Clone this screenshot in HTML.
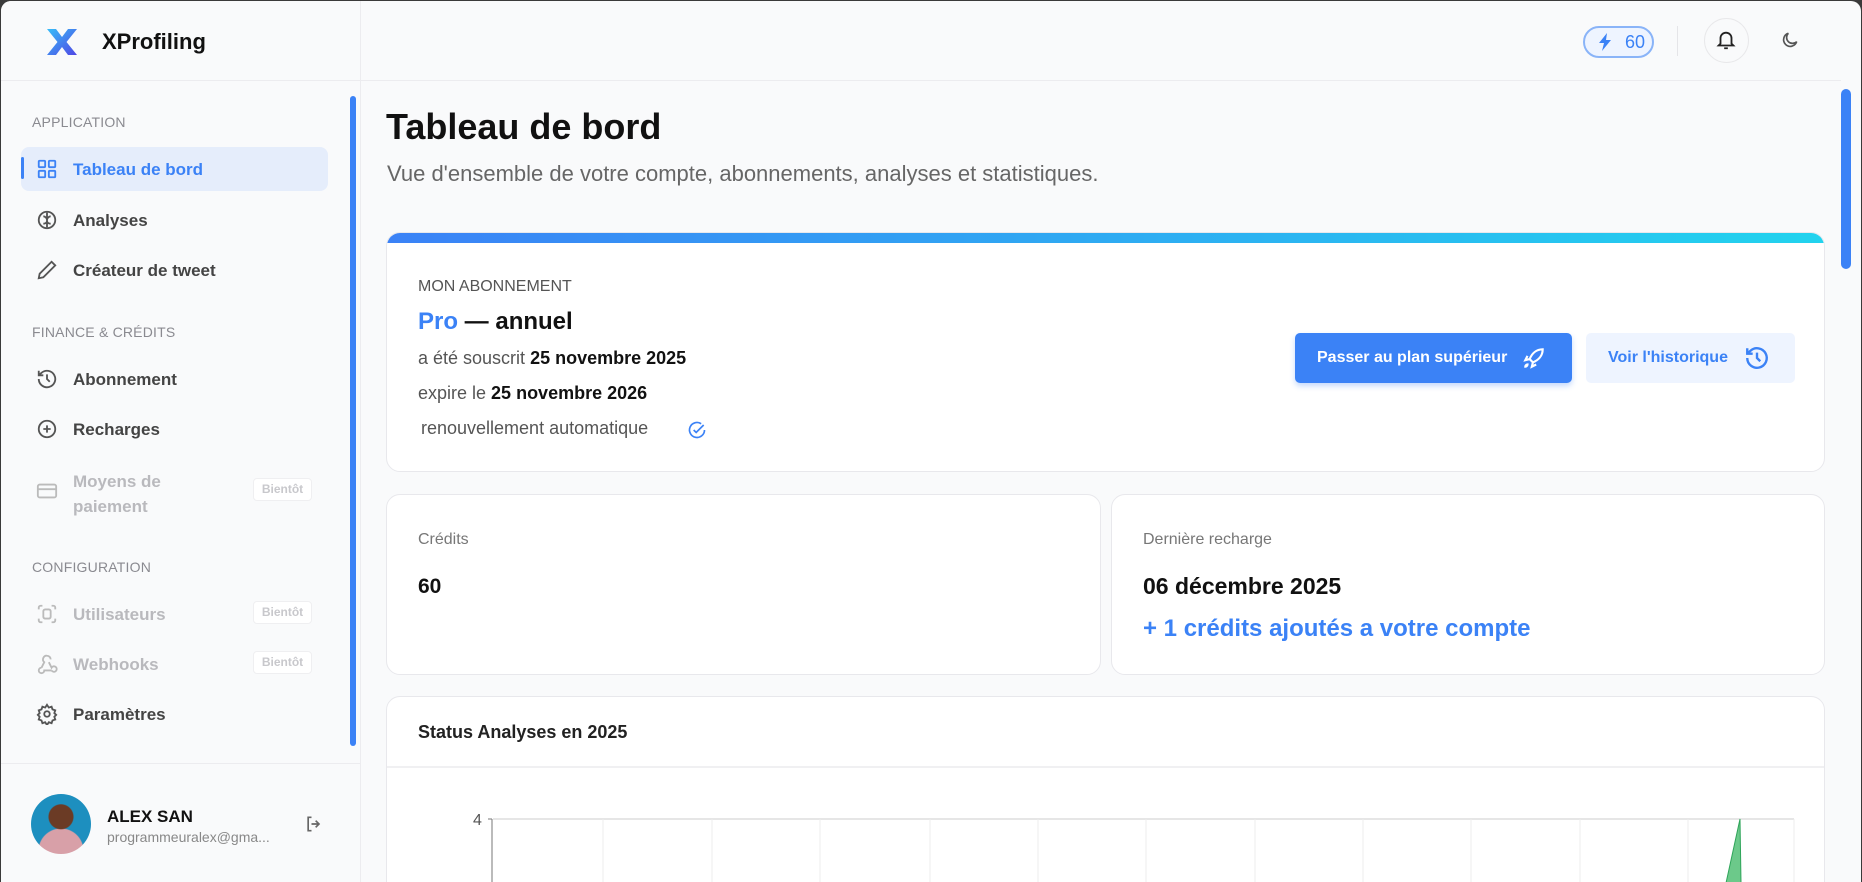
<!DOCTYPE html>
<html><head><meta charset="utf-8"><style>
*{box-sizing:border-box;margin:0;padding:0}
body{width:1862px;height:882px;overflow:hidden;background:#3a3a3a;font-family:"Liberation Sans",sans-serif;position:relative}
.win{position:absolute;left:1px;top:1px;width:1860px;height:881px;background:#f9fafb;border-radius:10px 10px 0 0;overflow:hidden}
.abs{position:absolute}
.side{position:absolute;left:0;top:0;width:360px;height:882px;border-right:1px solid #ececef;background:#f9fafb}
.hdr{position:absolute;left:0;top:79px;width:1840px;height:1px;background:#ececef}
.sec{position:absolute;left:31px;font-size:14px;color:#8a8a90;letter-spacing:.2px}
.item{position:absolute;left:72px;font-size:17px;color:#444;font-weight:bold}
.ic{position:absolute;left:35px;width:22px;height:22px}
.dis{color:#b9b9bd}
.soon{position:absolute;left:252px;width:59px;height:23px;border:1px solid #efeff1;border-radius:4px;font-size:12px;color:#c8c8cc;text-align:center;line-height:21px;font-weight:bold;background:#fff}
.card{position:absolute;background:#fff;border:1px solid #e8e8ec;border-radius:14px}
.lbl{font-size:16px;color:#777}
</style></head><body><div class="win">
<div class="side">
<svg class="abs" style="left:45px;top:28px" width="32" height="26" viewBox="0 0 32 26"><defs><linearGradient id="g" x1="0" y1="0" x2="1" y2="1"><stop offset="0" stop-color="#38bdf8"/><stop offset="1" stop-color="#4f46e5"/></linearGradient></defs><path d="M1 0h9l6 8 6-8h9l-10.5 13L31 26h-9l-6-8-6 8H1l10.5-13z" fill="url(#g)"/></svg>
<div class="abs" style="left:101px;top:28px;font-size:22px;font-weight:bold;color:#111">XProfiling</div>
<div class="sec" style="top:113px">APPLICATION</div>
<div class="abs" style="left:20px;top:146px;width:307px;height:44px;background:#e5edfb;border-radius:8px"></div>
<div class="abs" style="left:20px;top:156px;width:3px;height:22px;background:#3b82f6;border-radius:2px"></div>
<svg class="ic" style="top:157px" viewBox="0 0 24 24" fill="none" stroke="#3b82f6" stroke-width="2"><rect x="3" y="3" width="7" height="7" rx="1"/><rect x="14" y="3" width="7" height="7" rx="1"/><rect x="14" y="14" width="7" height="7" rx="1"/><rect x="3" y="14" width="7" height="7" rx="1"/></svg>
<div class="item" style="top:159px;color:#3b82f6">Tableau de bord</div>
<svg class="ic" style="top:208px" viewBox="0 0 24 24" fill="none" stroke="#555" stroke-width="2"><circle cx="12" cy="12" r="9"/><path d="M12 4v16M8 8c2 0 4 2 4 4M16 8c-2 0-4 2-4 4M8 16c2 0 4-1 4-3M16 16c-2 0-4-1-4-3"/></svg>
<div class="item" style="top:210px">Analyses</div>
<svg class="ic" style="top:258px" viewBox="0 0 24 24" fill="none" stroke="#555" stroke-width="2"><path d="M17 3l4 4L8 20l-5 1 1-5z"/></svg>
<div class="item" style="top:260px">Créateur de tweet</div>
<div class="sec" style="top:323px">FINANCE &amp; CRÉDITS</div>
<svg class="ic" style="top:367px" viewBox="0 0 24 24" fill="none" stroke="#555" stroke-width="2"><path d="M3 12a9 9 0 1 0 3-6.7L3 8M3 3v5h5M12 7v5l3 3"/></svg>
<div class="item" style="top:369px">Abonnement</div>
<svg class="ic" style="top:417px" viewBox="0 0 24 24" fill="none" stroke="#555" stroke-width="2"><circle cx="12" cy="12" r="9"/><path d="M12 8v8M8 12h8"/></svg>
<div class="item" style="top:419px">Recharges</div>
<svg class="ic" style="top:479px" viewBox="0 0 24 24" fill="none" stroke="#bbb" stroke-width="2"><rect x="2" y="5" width="20" height="14" rx="2"/><path d="M2 10h20"/></svg>
<div class="item dis" style="top:468px;line-height:25px">Moyens de<br>paiement</div>
<div class="soon" style="top:477px">Bientôt</div>
<div class="sec" style="top:558px">CONFIGURATION</div>
<svg class="ic" style="top:602px" viewBox="0 0 24 24" fill="none" stroke="#bbb" stroke-width="2"><path d="M3 7V5a2 2 0 0 1 2-2h2M17 3h2a2 2 0 0 1 2 2v2M21 17v2a2 2 0 0 1-2 2h-2M7 21H5a2 2 0 0 1-2-2v-2"/><rect x="8" y="7" width="8" height="10" rx="2"/></svg>
<div class="item dis" style="top:604px">Utilisateurs</div>
<div class="soon" style="top:600px">Bientôt</div>
<svg class="ic" style="top:652px" viewBox="0 0 24 24" fill="none" stroke="#bbb" stroke-width="2"><path d="M12 3a4 4 0 0 0-3 7l-3 6M12 3a4 4 0 0 1 4 4M6 16a3 3 0 1 0 3 3h8M14 10l3 6a3 3 0 1 1 0 3"/></svg>
<div class="item dis" style="top:654px">Webhooks</div>
<div class="soon" style="top:650px">Bientôt</div>
<svg class="ic" style="top:702px" viewBox="0 0 24 24" fill="none" stroke="#555" stroke-width="2"><circle cx="12" cy="12" r="3"/><path d="M12 2l2 3 3-1 1 3 3 1-1 3 2 2-2 2 1 3-3 1-1 3-3-1-2 3-2-3-3 1-1-3-3-1 1-3-2-2 2-2-1-3 3-1 1-3 3 1z"/></svg>
<div class="item" style="top:704px">Paramètres</div>
<div class="abs" style="left:349px;top:95px;width:6px;height:650px;background:#3b82f6;border-radius:3px"></div>
<div class="abs" style="left:0;top:762px;width:360px;height:1px;background:#ececef"></div>
<div class="abs" style="left:30px;top:793px;width:60px;height:60px;border-radius:50%;background:radial-gradient(circle at 50% 38%,#6b3b25 0 12px,transparent 13px),radial-gradient(circle at 50% 95%,#d8a0a8 0 22px,transparent 23px),#1d8fbf"></div>
<div class="abs" style="left:106px;top:806px;font-size:17px;font-weight:bold;color:#111">ALEX SAN</div>
<div class="abs" style="left:106px;top:828px;font-size:14px;color:#888">programmeuralex@gma...</div>
<svg class="abs" style="left:303px;top:813px" width="20" height="20" viewBox="0 0 24 24" fill="none" stroke="#666" stroke-width="2"><path d="M9 4H5v16h4M14 8l4 4-4 4M18 12H9"/></svg>
</div>
<div class="hdr"></div>
<div class="abs" style="left:1582px;top:25px;width:71px;height:32px;border:2px solid #8ab4f8;border-radius:16px;background:#eef4ff;color:#3b82f6;font-size:18px;line-height:28px;padding-left:40px">60</div>
<svg class="abs" style="left:1596px;top:32px" width="16" height="18" viewBox="0 0 16 18"><path d="M10 0L2 10h5l-2 8 9-11H9z" fill="#3b82f6"/></svg>
<div class="abs" style="left:1676px;top:25px;width:1px;height:30px;background:#e5e5e8"></div>
<div class="abs" style="left:1703px;top:17px;width:45px;height:45px;border:1px solid #e8e8ea;border-radius:50%"></div>
<svg class="abs" style="left:1714px;top:28px" width="22" height="22" viewBox="0 0 24 24" fill="none" stroke="#222" stroke-width="2"><path d="M6 16V10a6 6 0 0 1 12 0v6l2 2H4zM10 21h4"/></svg>
<svg class="abs" style="left:1779px;top:29px" width="20" height="20" viewBox="0 0 24 24" fill="none" stroke="#555" stroke-width="2"><path d="M20 14A8 8 0 1 1 10 4a6 6 0 0 0 10 10z"/></svg>
<div class="abs" style="left:1840px;top:88px;width:10px;height:180px;background:#3b82f6;border-radius:5px"></div>
<div class="abs" style="left:385px;top:105px;font-size:36px;font-weight:bold;color:#111">Tableau de bord</div>
<div class="abs" style="left:386px;top:160px;font-size:22px;color:#666">Vue d'ensemble de votre compte, abonnements, analyses et statistiques.</div>
<div class="card" style="left:385px;top:231px;width:1439px;height:240px;overflow:hidden">
<div class="abs" style="left:0;top:0;width:100%;height:10px;background:linear-gradient(90deg,#3b82f6,#22d3ee)"></div>
<div class="abs" style="left:31px;top:45px;font-size:16px;color:#555">MON ABONNEMENT</div>
<div class="abs" style="left:31px;top:75px;font-size:24px;font-weight:bold;color:#111"><span style="color:#3b82f6">Pro</span> — annuel</div>
<div class="abs" style="left:31px;top:115px;font-size:18px;color:#555">a été souscrit <b style="color:#111">25 novembre 2025</b></div>
<div class="abs" style="left:31px;top:150px;font-size:18px;color:#555">expire le <b style="color:#111">25 novembre 2026</b></div>
<div class="abs" style="left:34px;top:185px;font-size:18px;color:#555">renouvellement automatique</div>
<svg class="abs" style="left:300px;top:187px" width="20" height="20" viewBox="0 0 24 24" fill="none" stroke="#3b82f6" stroke-width="2"><path d="M21 12a9 9 0 1 1-4-7.5"/><path d="M8 12l3 3 9-9"/></svg>
<div class="abs" style="left:908px;top:100px;width:277px;height:50px;background:#3b82f6;border-radius:5px;color:#fff;font-size:16px;font-weight:bold;line-height:50px;padding-left:22px;box-shadow:0 3px 6px rgba(59,130,246,.3)">Passer au plan supérieur</div>
<svg class="abs" style="left:1134px;top:112px" width="26" height="26" viewBox="0 0 24 24" fill="none" stroke="#fff" stroke-width="2"><path d="M20 4c-6 0-10 4-12 9l3 3c5-2 9-6 9-12zM8 13l-4 1 2-4M11 16l-1 4 4-2M6 18c-1 0-2 1-2 2 1 0 2-1 2-2z"/></svg>
<div class="abs" style="left:1199px;top:100px;width:209px;height:50px;background:#eef4ff;border-radius:5px;color:#3b82f6;font-size:16px;font-weight:bold;line-height:50px;padding-left:22px">Voir l'historique</div>
<svg class="abs" style="left:1357px;top:112px" width="26" height="26" viewBox="0 0 24 24" fill="none" stroke="#3b82f6" stroke-width="2.2"><path d="M3 12a9 9 0 1 0 3-6.7L3 8M3 3v5h5M12 7v5l3 3"/></svg>
</div>
<div class="card" style="left:385px;top:493px;width:715px;height:181px">
<div class="abs lbl" style="left:31px;top:36px">Crédits</div>
<div class="abs" style="left:31px;top:80px;font-size:21px;font-weight:bold;color:#111">60</div>
</div>
<div class="card" style="left:1110px;top:493px;width:714px;height:181px">
<div class="abs lbl" style="left:31px;top:36px">Dernière recharge</div>
<div class="abs" style="left:31px;top:78px;font-size:23px;font-weight:bold;color:#111">06 décembre 2025</div>
<div class="abs" style="left:31px;top:120px;font-size:24px;font-weight:bold;color:#3b82f6">+ 1 crédits ajoutés a votre compte</div>
</div>
<div class="card" style="left:385px;top:695px;width:1439px;height:220px;overflow:hidden">
<div class="abs" style="left:31px;top:25px;font-size:18px;font-weight:bold;color:#222">Status Analyses en 2025</div>
<div class="abs" style="left:0;top:69px;width:100%;height:2px;background:#f0f0f2"></div>
</div>
<svg class="abs" style="left:470px;top:810px" width="1340" height="72">
<text x="2" y="14" font-size="16" fill="#555" font-family="Liberation Sans">4</text>
<line x1="22" y1="8" x2="1323" y2="8" stroke="#e6e6e6" stroke-width="2"/>
<g stroke="#ececec">
<line x1="132" y1="8" x2="132" y2="72"/><line x1="241" y1="8" x2="241" y2="72"/><line x1="349" y1="8" x2="349" y2="72"/><line x1="459" y1="8" x2="459" y2="72"/><line x1="567" y1="8" x2="567" y2="72"/><line x1="675" y1="8" x2="675" y2="72"/><line x1="784" y1="8" x2="784" y2="72"/><line x1="892" y1="8" x2="892" y2="72"/><line x1="1000" y1="8" x2="1000" y2="72"/><line x1="1109" y1="8" x2="1109" y2="72"/><line x1="1217" y1="8" x2="1217" y2="72"/><line x1="1323" y1="8" x2="1323" y2="72"/></g>
<line x1="21" y1="8" x2="21" y2="72" stroke="#777"/><line x1="17" y1="8" x2="21" y2="8" stroke="#777"/>
<path d="M1255 72L1269 8L1270 72z" fill="#6cc98a" stroke="#2fa55a"/>
</svg>
</div></body></html>
